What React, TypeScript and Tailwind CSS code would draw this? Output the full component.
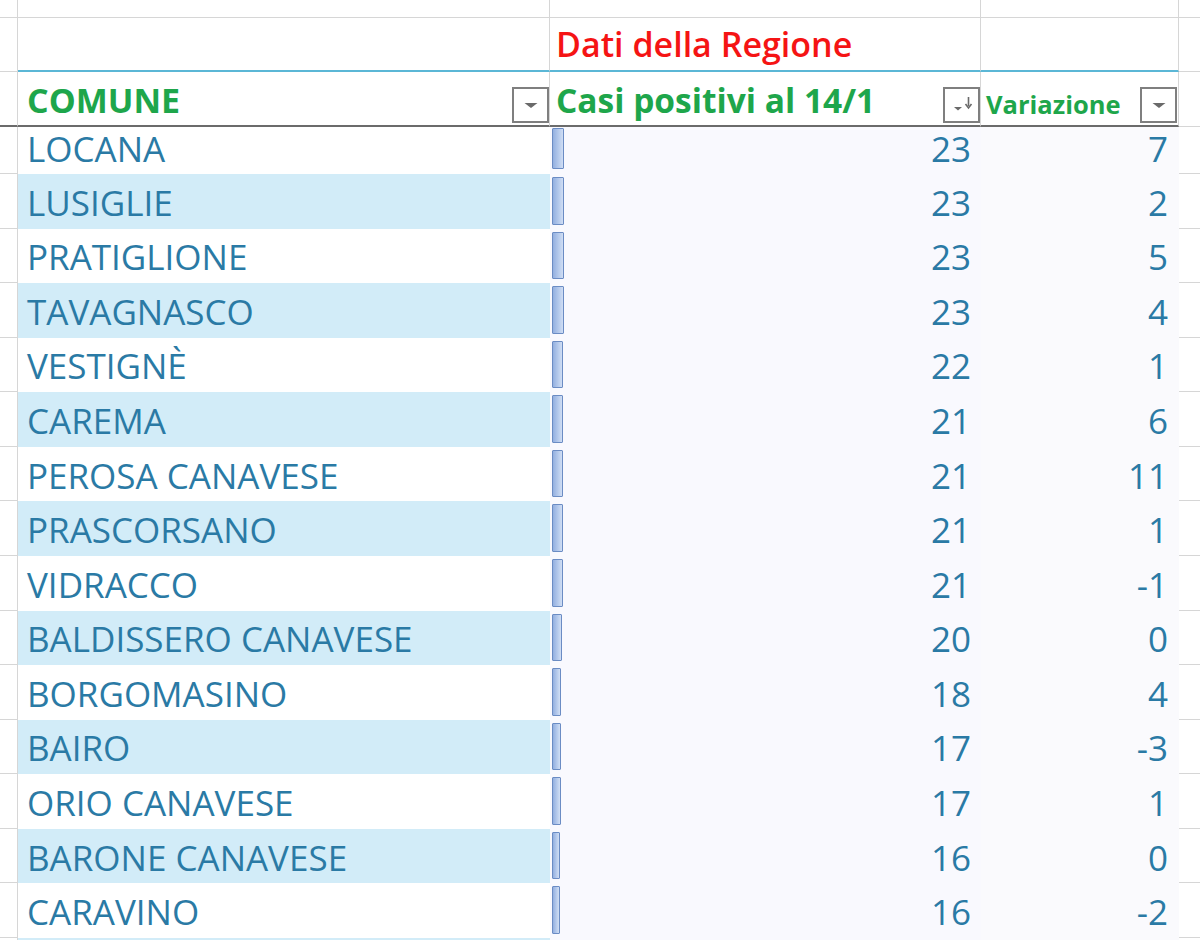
import React from "react"

interface Row {
  comune: string
  casi: number
  variazione: number
}

const rows: Row[] = [
  { comune: "LOCANA", casi: 23, variazione: 7 },
  { comune: "LUSIGLIE", casi: 23, variazione: 2 },
  { comune: "PRATIGLIONE", casi: 23, variazione: 5 },
  { comune: "TAVAGNASCO", casi: 23, variazione: 4 },
  { comune: "VESTIGNÈ", casi: 22, variazione: 1 },
  { comune: "CAREMA", casi: 21, variazione: 6 },
  { comune: "PEROSA CANAVESE", casi: 21, variazione: 11 },
  { comune: "PRASCORSANO", casi: 21, variazione: 1 },
  { comune: "VIDRACCO", casi: 21, variazione: -1 },
  { comune: "BALDISSERO CANAVESE", casi: 20, variazione: 0 },
  { comune: "BORGOMASINO", casi: 18, variazione: 4 },
  { comune: "BAIRO", casi: 17, variazione: -3 },
  { comune: "ORIO CANAVESE", casi: 17, variazione: 1 },
  { comune: "BARONE CANAVESE", casi: 16, variazione: 0 },
  { comune: "CARAVINO", casi: 16, variazione: -2 },
]

function FilterButton({ sorted = false }: { sorted?: boolean }) {
  return (
    <div className="w-[37px] h-[36px] border-2 border-[#7f7f7f] bg-white flex items-center justify-center">
      {sorted ? (
        <svg width="30" height="28" viewBox="0 0 30 28">
          <path d="M7 16 L15 16 L11 19.5 Z" fill="#6a6a6a" />
          <path d="M21.5 6 L21.5 15" stroke="#6a6a6a" strokeWidth="1.6" />
          <path d="M18.5 13 L21.5 17 L24.5 13" stroke="#6a6a6a" strokeWidth="1.6" fill="none" />
        </svg>
      ) : (
        <svg width="16" height="10" viewBox="0 0 16 10">
          <path d="M1.5 3 L14.5 3 L8 8 Z" fill="#6a6a6a" />
        </svg>
      )}
    </div>
  )
}

export default function App() {
  return (
    <div
      className="w-[1200px] h-[940px] overflow-hidden bg-white"
      style={{ fontFamily: '"Open Sans", "Noto Sans", sans-serif' }}
    >
      {/* top gridline row */}
      <div className="flex h-[18px]">
        <div className="w-[18px] border-r border-b border-[#d6d6d6]" />
        <div className="w-[532px] border-r border-b border-[#d6d6d6]" />
        <div className="w-[431px] border-r border-b border-[#d6d6d6]" />
        <div className="w-[198px] border-r border-b border-[#d6d6d6]" />
        <div className="flex-1 border-b border-[#d6d6d6]" />
      </div>

      {/* header row 1 */}
      <div className="flex h-[54px]">
        <div className="w-[18px] border-r border-b border-[#d6d6d6]" />
        <div className="w-[532px] border-r border-r-[#d6d6d6] border-b-2 border-b-[#5bb7d6]" />
        <div className="w-[431px] border-r border-r-[#d6d6d6] border-b-2 border-b-[#5bb7d6] flex items-center pl-[6px] pb-[1px]">
          <span className="text-[34px] font-semibold text-[#f51414] leading-none">Dati della Regione</span>
        </div>
        <div className="w-[198px] border-r border-r-[#d6d6d6] border-b-2 border-b-[#5bb7d6]" />
        <div className="flex-1 border-b border-[#d6d6d6]" />
      </div>

      {/* header row 2 */}
      <div className="flex h-[55px]">
        <div className="w-[18px] border-r border-r-[#d6d6d6] border-b-2 border-b-[#6b6b6b]" />
        <div className="w-[532px] border-r border-r-[#d6d6d6] border-b-2 border-b-[#6b6b6b] flex items-end justify-between pl-[9px] pb-[2px]">
          <span className="text-[34px] font-bold text-[#1ea64b] leading-none mb-[6px]">COMUNE</span>
          <FilterButton />
        </div>
        <div className="w-[431px] border-r border-r-[#d6d6d6] border-b-2 border-b-[#6b6b6b] flex items-end justify-between pl-[6px] pb-[2px]">
          <span className="text-[33.5px] font-bold text-[#1ea64b] leading-none mb-[6px]">Casi positivi al 14/1</span>
          <FilterButton sorted />
        </div>
        <div className="w-[198px] border-r border-r-[#d6d6d6] border-b-2 border-b-[#6b6b6b] flex items-end justify-between pl-[5px] pr-[1px] pb-[2px]">
          <span className="text-[25.5px] font-bold text-[#1ea64b] leading-none mb-[6px]">Variazione</span>
          <FilterButton />
        </div>
        <div className="flex-1 border-b border-[#d6d6d6]" />
      </div>

      {/* data rows */}
      {[...rows, null].map((r, i) => {
        const striped = i % 2 === 1
        const barWidth = r ? Math.round(r.casi * 0.52) : 0
        return (
          <div key={i} className={i === 0 ? "flex h-[47px]" : "flex h-[54.57px]"}>
            <div className="w-[18px] border-r border-b border-[#d6d6d6]" />
            <div
              className={`w-[532px] flex items-center pl-[9px] ${
                striped ? "bg-[#d2ecf8]" : "bg-white"
              } ${i === 0 ? "pb-[4px]" : "pt-[2px]"}`}
            >
              {r && <span className="text-[35px] text-[#2a7aa5] leading-none">{r.comune}</span>}
            </div>
            <div
              className={`w-[431px] bg-[#f9f9fe] flex items-center pr-[10px] ${i === 0 ? "pb-[4px]" : "pt-[2px]"}`}
            >
              {r && (
                <>
                  <div
                    className={`self-stretch ml-[2px] border border-[#6b8cc4] rounded-[1px] bg-gradient-to-r from-[#93afe0] to-[#d0def4] ${
                      i === 0 ? "mt-[1px] mb-[1px]" : "mt-[1px] mb-[4px]"
                    }`}
                    style={{ width: barWidth }}
                  />
                  <span className="ml-auto text-[35px] text-[#2a7aa5] leading-none">{r.casi}</span>
                </>
              )}
            </div>
            <div
              className={`w-[198px] bg-[#fafafd] flex items-center justify-end pr-[11px] ${
                i === 0 ? "pb-[4px]" : "pt-[2px]"
              }`}
            >
              {r && <span className="text-[35px] text-[#2a7aa5] leading-none">{r.variazione}</span>}
            </div>
            <div className="flex-1 border-b border-[#d6d6d6]" />
          </div>
        )
      })}
    </div>
  )
}
